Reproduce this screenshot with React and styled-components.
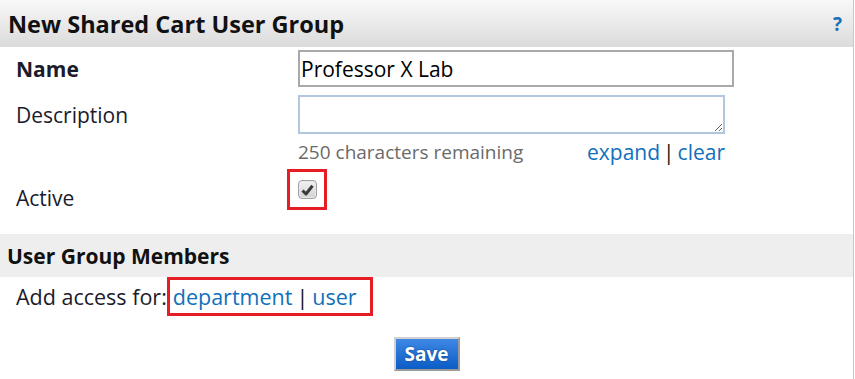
import React from 'react';
import styled, { createGlobalStyle } from 'styled-components';

const GlobalStyle = createGlobalStyle`
  body {
    margin: 0;
    background: #fff;
    font-family: 'Open Sans', 'Noto Sans', sans-serif;
    color: #1b1b2b;
  }
`;

function CheckMark() {
  return (
    <svg width="13" height="12" viewBox="0 0 13 12">
      <path d="M1.5 6.5 L5 10 L11.5 1.8" fill="none" stroke="#3a3a3a" strokeWidth="3" strokeLinejoin="round" />
    </svg>
  );
}

function App() {
  return (
    <>
      <GlobalStyle />
      <Panel>
        <PanelHeader>
          <Title>New Shared Cart User Group</Title>
          <HelpLink href="#">?</HelpLink>
        </PanelHeader>

        <FormRow $top={3}>
          <Label $bold>Name</Label>
          <TextInput defaultValue="Professor X Lab" />
        </FormRow>

        <FormRow $top={8}>
          <Label>Description</Label>
          <TextArea />
        </FormRow>

        <FormRow $top={4}>
          <Label />
          <Counter>
            <Muted>250 characters remaining</Muted>
            <span>
              <Link href="#">expand</Link>
              <Sep $gap={3}>|</Sep>
              <Link href="#">clear</Link>
            </span>
          </Counter>
        </FormRow>

        <FormRow $top={3} $align="flex-start">
          <Label $offset={15}>Active</Label>
          <CheckHighlight>
            <FakeCheck role="checkbox" aria-checked="true">
              <CheckMark />
            </FakeCheck>
          </CheckHighlight>
        </FormRow>

        <SectionHeader>User Group Members</SectionHeader>

        <AccessRow>
          <span>Add access for:</span>
          <LinkHighlight>
            <Link href="#">department</Link>
            <Sep $gap={4}>|</Sep>
            <Link href="#">user</Link>
          </LinkHighlight>
        </AccessRow>

        <Actions>
          <SaveButton type="button">Save</SaveButton>
        </Actions>
      </Panel>
    </>
  );
}

const Panel = styled.div`
  width: 854px;
  min-height: 379px;
  box-sizing: border-box;
  border-right: 1px solid #c8c8c8;
`;

const PanelHeader = styled.div`
  display: flex;
  align-items: center;
  justify-content: space-between;
  height: 47px;
  padding: 0 11px 0 8px;
  box-sizing: border-box;
  background: linear-gradient(#f8f8f8, #dbdbdb);
`;

const Title = styled.h2`
  margin: 0;
  font-size: 23.5px;
  font-weight: 700;
  color: #111;
`;

const HelpLink = styled.a`
  font-size: 19px;
  font-weight: 700;
  color: #1a6fb7;
  text-decoration: none;
`;

const FormRow = styled.div`
  display: flex;
  align-items: ${p => p.$align || 'center'};
  margin-top: ${p => p.$top || 0}px;
  padding-left: 16px;
`;

const Label = styled.div`
  width: 282px;
  flex: none;
  font-size: 21px;
  line-height: 28px;
  font-weight: ${p => (p.$bold ? 700 : 400)};
  margin-top: ${p => p.$offset || 0}px;
`;

const TextInput = styled.input`
  width: 436px;
  height: 37px;
  box-sizing: border-box;
  border: 2px solid #a9a9a9;
  padding: 0 1px;
  font-family: inherit;
  font-size: 21px;
  color: #000;
  outline: none;
`;

const TextArea = styled.textarea`
  width: 427px;
  height: 39px;
  box-sizing: border-box;
  border: 2px solid #b3c6e0;
  margin: 0;
  padding: 2px;
  font-family: inherit;
  font-size: 16px;
  outline: none;
`;

const Counter = styled.div`
  width: 427px;
  display: flex;
  justify-content: space-between;
  align-items: center;
  font-size: 21px;
  line-height: 28px;
`;

const Muted = styled.span`
  color: #6a6a6a;
  font-size: 19px;
`;

const Link = styled.a`
  color: #1070bb;
  text-decoration: none;
`;

const Sep = styled.span`
  color: #111;
  margin: 0 ${p => p.$gap}px;
`;

const CheckHighlight = styled.div`
  margin-left: -11px;
  padding: 8px 7px 8px 8px;
  border: 3px solid #e51d25;
  display: flex;
`;

const FakeCheck = styled.span`
  width: 19px;
  height: 19px;
  box-sizing: border-box;
  border: 1px solid #a0a0a0;
  border-radius: 4px;
  background: linear-gradient(#f2f2f2, #d2d2d2);
  box-shadow: inset 0 0 0 1px #e8e8e8;
  display: flex;
  align-items: center;
  justify-content: center;
`;

const SectionHeader = styled.h3`
  margin: 22px 0 0;
  height: 43px;
  display: flex;
  align-items: center;
  padding-left: 7px;
  background: #eeeeee;
  font-size: 21px;
  font-weight: 700;
  color: #111;
`;

const AccessRow = styled.div`
  display: flex;
  align-items: center;
  padding-left: 16px;
  font-size: 21.5px;
`;

const LinkHighlight = styled.span`
  height: 39px;
  box-sizing: border-box;
  display: flex;
  align-items: center;
  padding: 0 13px 0 3px;
  border: 3px solid #e51d25;
`;

const Actions = styled.div`
  display: flex;
  justify-content: center;
  margin-top: 21px;
`;

const SaveButton = styled.button`
  width: 66px;
  height: 34px;
  box-sizing: border-box;
  border: 2px solid;
  border-color: #d0d0d0 #9a9a9a #9a9a9a #d0d0d0;
  background: linear-gradient(#3f89e4, #0b5cc6);
  color: #fff;
  font-family: inherit;
  font-size: 19px;
  font-weight: 700;
  text-shadow: 0 0 2px #0a3c8a;
  padding: 0;
  cursor: pointer;
`;

export default App;
